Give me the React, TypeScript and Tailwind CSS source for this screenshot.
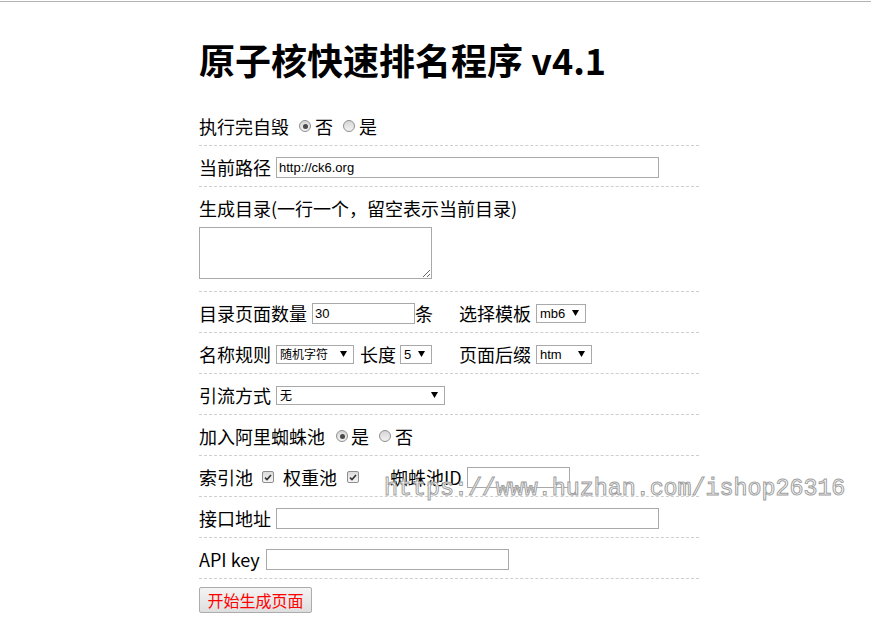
import React from "react";

const CJK = "font-['Noto_Sans_CJK_SC',sans-serif]";
const LAT = "font-['Liberation_Sans',Arial,sans-serif]";

function Radio({ checked }: { checked?: boolean }) {
  return (
    <span className="inline-flex w-3 h-3 shrink-0 items-center justify-center rounded-full border border-[#8e8e8e] bg-linear-to-b from-[#d6d6d6] to-[#f3f3f3]">
      {checked && <span className="block w-[5px] h-[5px] rounded-full bg-[#4a4a4a]" />}
    </span>
  );
}

function Check() {
  return (
    <span className="inline-flex w-3 h-3 shrink-0 items-center justify-center rounded-[2px] border border-[#8e8e8e] bg-linear-to-b from-[#dcdcdc] to-[#f5f5f5]">
      <svg width="8" height="7" viewBox="0 0 8 7">
        <path d="M1 3.6 L3 5.6 L7 1" fill="none" stroke="#333" strokeWidth="1.6" />
      </svg>
    </span>
  );
}

function Select({ text, w, cjk }: { text: string; w: string; cjk?: boolean }) {
  return (
    <div
      className={`${w} h-[19px] shrink-0 flex items-center justify-between border border-[#a9a9a9] bg-white pl-[3px] pr-[6px] ${
        cjk ? "text-[12px] " + CJK : "text-[13px] " + LAT
      } text-black`}
    >
      <span className="leading-none">{text}</span>
      <svg width="7" height="6" viewBox="0 0 7 6" className="shrink-0">
        <polygon points="0,0 7,0 3.5,6" fill="#000" />
      </svg>
    </div>
  );
}

function TextInput({ w, value }: { w: string; value?: string }) {
  return (
    <input
      readOnly
      defaultValue={value}
      className={`${w} h-[21px] shrink-0 border border-[#a9a9a9] bg-white px-[2px] text-[13px] text-black outline-none ${LAT}`}
    />
  );
}

const row = "flex items-center h-[41px] pt-[2px] border-b border-dashed border-[#cfcfcf]";

export default function App() {
  return (
    <div className={`relative min-h-[624px] bg-white text-black text-[18px] ${CJK}`}>
      <div className="pt-px">
        <div className="h-px bg-[#b3b3b3]" />
      </div>
      <div className="ml-[199px] w-[500px]">
        <h1 className="mt-[39px] mb-[28px] text-[36px] leading-[36px] font-bold">原子核快速排名程序 v4.1</h1>

        <div className={row}>
          <span>执行完自毁</span>
          <span className="ml-[10px] flex"><Radio checked /></span>
          <span className="ml-[4px]">否</span>
          <span className="ml-[10px] flex"><Radio /></span>
          <span className="ml-[4px]">是</span>
        </div>

        <div className={row}>
          <span>当前路径</span>
          <span className="ml-[5px] flex"><TextInput w="w-[383px]" value="http://ck6.org" /></span>
        </div>

        <div className="h-[105px] border-b border-dashed border-[#cfcfcf] pt-[10px]">
          <div className="leading-[22px]">生成目录(一行一个，留空表示当前目录)</div>
          <textarea
            readOnly
            className="mt-[8px] block w-[233px] h-[52px] border border-[#a9a9a9] bg-white outline-none"
          />
        </div>

        <div className={row}>
          <span>目录页面数量</span>
          <span className="ml-[5px] flex"><TextInput w="w-[103px]" value="30" /></span>
          <span>条</span>
          <span className="ml-[26px]">选择模板</span>
          <span className="ml-[5px] flex"><Select text="mb6" w="w-[50px]" /></span>
        </div>

        <div className={row}>
          <span>名称规则</span>
          <span className="ml-[5px] flex"><Select text="随机字符" w="w-[78px]" cjk /></span>
          <span className="ml-[6px]">长度</span>
          <span className="ml-[4px] flex"><Select text="5" w="w-[32px]" /></span>
          <span className="ml-[27px]">页面后缀</span>
          <span className="ml-[5px] flex"><Select text="htm" w="w-[56px]" /></span>
        </div>

        <div className={row}>
          <span>引流方式</span>
          <span className="ml-[5px] flex"><Select text="无" w="w-[169px]" cjk /></span>
        </div>

        <div className={row}>
          <span>加入阿里蜘蛛池</span>
          <span className="ml-[11px] flex"><Radio checked /></span>
          <span className="ml-[3px]">是</span>
          <span className="ml-[10px] flex"><Radio /></span>
          <span className="ml-[4px]">否</span>
        </div>

        <div className={row}>
          <span>索引池</span>
          <span className="ml-[9px] flex"><Check /></span>
          <span className="ml-[9px]">权重池</span>
          <span className="ml-[10px] flex"><Check /></span>
          <span className="ml-[31px]">蜘蛛池ID</span>
          <span className="ml-[5px] flex"><TextInput w="w-[103px]" /></span>
        </div>

        <div className={row}>
          <span>接口地址</span>
          <span className="ml-[5px] flex"><TextInput w="w-[383px]" /></span>
        </div>

        <div className={row}>
          <span>API key</span>
          <span className="ml-[6px] flex"><TextInput w="w-[243px]" /></span>
        </div>

        <button className="mt-[8px] w-[113px] h-[26px] border border-[#acacac] rounded-[2px] bg-linear-to-b from-[#f4f4f4] to-[#dedede] text-[16px] leading-none text-[#ff0000]">
          开始生成页面
        </button>
      </div>

      <div className="pointer-events-none absolute left-[384px] top-[475px] font-['Liberation_Mono',monospace] text-[23.3px] leading-[28px] text-white [-webkit-text-stroke:1px_#a0a0a0] whitespace-nowrap">
        https://www.huzhan.com/ishop26316
      </div>
    </div>
  );
}
